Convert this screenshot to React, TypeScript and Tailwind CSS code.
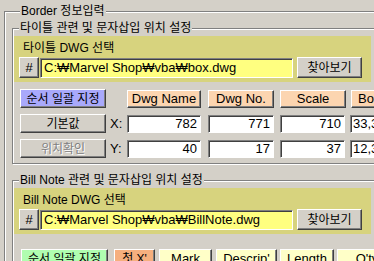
import React from 'react';

// classic 3D borders
const raised =
  'border border-t-white border-l-white border-r-[#404040] border-b-[#404040] shadow-[inset_-1px_-1px_0_#808080]';
const sunken =
  'border border-t-[#808080] border-l-[#808080] border-r-white border-b-white shadow-[inset_1px_1px_0_#404040]';

type BtnProps = {
  label: string;
  className: string;
  disabled?: boolean;
};

const Btn = ({ label, className, disabled }: BtnProps) => (
  <div
    className={`${raised} ${className} shrink-0 flex items-center justify-center leading-none whitespace-nowrap overflow-hidden ${
      disabled ? 'text-[#808080] [text-shadow:1px_1px_0_#fff]' : 'text-black'
    }`}
  >
    {label}
  </div>
);

const Field = ({ value, className }: { value: string; className: string }) => (
  <div
    className={`${sunken} ${className} shrink-0 bg-white flex items-center justify-end pr-[3px] text-[13px] leading-none whitespace-nowrap overflow-hidden`}
  >
    {value}
  </div>
);

type GroupProps = {
  title: string;
  className?: string;
  legendClass?: string;
  children: React.ReactNode;
};

const Group = ({ title, className = '', legendClass = '', children }: GroupProps) => (
  <fieldset
    className={`border border-[#808080] shadow-[inset_1px_1px_0_#fff,1px_1px_0_#fff] ${className}`}
  >
    <legend className={`px-[1px] bg-[#d4d0c8] leading-[16px] h-[16px] whitespace-nowrap ${legendClass}`}>
      {title}
    </legend>
    {children}
  </fieldset>
);

// yellow DWG picker panel
const DwgPanel = ({ label, path }: { label: string; path: string }) => (
  <div className="ml-[1px] w-[357px] h-[46px] bg-[#d7d37e] pt-[5px] flex flex-col">
    <div className="ml-[9px] h-[14px] leading-[14px] whitespace-nowrap">{label}</div>
    <div className="mt-[2px] ml-[5px] flex items-center">
      <Btn label="#" className="w-[20px] h-[21px] bg-[#d4d0c8] text-[13px]" />
      <div
        className={`${sunken} ml-[1px] w-[253px] h-[20px] bg-[#ffff80] flex items-center pl-[3px] text-[13px] leading-none whitespace-nowrap overflow-hidden`}
      >
        {path}
      </div>
      <Btn label="찾아보기" className="ml-[4px] w-[65px] h-[21px] bg-[#d4d0c8]" />
    </div>
  </div>
);

export default function App() {
  return (
    <div className="w-[374px] h-[261px] overflow-hidden bg-[#d4d0c8] pt-[3px] pl-[4px] text-[12px] text-black font-['Liberation_Sans','Noto_Sans_CJK_KR',sans-serif]">
      <Group title="Border 정보입력" className="w-[430px] h-[320px] pl-[7px]" legendClass="ml-[8px]">
        <Group
          title="타이틀 관련 및 문자삽입 위치 설정"
          className="mt-[1px] w-[400px] pb-[5px]"
          legendClass="ml-[6px]"
        >
          <DwgPanel label="타이틀 DWG 선택" path="C:₩Marvel Shop₩vba₩box.dwg" />

          <div className="mt-[7px] ml-[7px] flex items-center h-[19px]">
            <Btn label="순서 일괄 지정" className="w-[86px] h-[19px] bg-[#a9a9fb]" />
            <Btn label="Dwg Name" className="ml-[21px] w-[74px] h-[18px] bg-[#fcd5b0] text-[13px]" />
            <Btn label="Dwg No." className="ml-[7px] w-[66px] h-[18px] bg-[#fcd5b0] text-[13px]" />
            <Btn label="Scale" className="ml-[6px] w-[66px] h-[18px] bg-[#fcd5b0] text-[13px]" />
            <Btn label="Border" className="ml-[5px] w-[66px] h-[18px] bg-[#fcd5b0] text-[13px] !justify-start pl-[6px]" />
          </div>

          <div className="mt-[6px] ml-[7px] flex items-center h-[19px]">
            <Btn label="기본값" className="w-[86px] h-[19px] bg-[#d4d0c8]" />
            <div className="w-[21px] pl-[4px] text-[13px] leading-none">X:</div>
            <Field value="782" className="w-[74px] h-[18px]" />
            <Field value="771" className="ml-[7px] w-[66px] h-[18px]" />
            <Field value="710" className="ml-[6px] w-[65px] h-[18px]" />
            <Field value="33,3" className="ml-[5px] w-[66px] h-[18px] !justify-start pl-[2px]" />
          </div>

          <div className="mt-[6px] ml-[7px] flex items-center h-[19px]">
            <Btn label="위치확인" className="w-[86px] h-[19px] bg-[#d4d0c8]" disabled />
            <div className="w-[21px] pl-[4px] text-[13px] leading-none">Y:</div>
            <Field value="40" className="w-[74px] h-[18px]" />
            <Field value="17" className="ml-[7px] w-[66px] h-[18px]" />
            <Field value="37" className="ml-[6px] w-[65px] h-[18px]" />
            <Field value="12,3" className="ml-[5px] w-[66px] h-[18px] !justify-start pl-[2px]" />
          </div>
        </Group>

        <Group
          title="Bill Note 관련 및 문자삽입 위치 설정"
          className="mt-[8px] w-[400px] h-[120px]"
          legendClass="ml-[6px]"
        >
          <DwgPanel label="Bill Note DWG 선택" path="C:₩Marvel Shop₩vba₩BillNote.dwg" />

          <div className="mt-[15px] ml-[8px] flex items-start">
            <Btn label="순서 일괄 지정" className="w-[87px] h-[19px] bg-[#b0fdb0]" />
            <Btn label="첫 X'" className="ml-[6px] w-[41px] h-[19px] bg-[#f6af7e]" />
            <Btn label="Mark" className="ml-[4px] w-[53px] h-[19px] bg-[#ffffc8] text-[13px]" />
            <Btn label="Descrip'" className="ml-[4px] w-[61px] h-[19px] bg-[#ffffc8] text-[13px]" />
            <Btn label="Length" className="ml-[3px] w-[54px] h-[19px] bg-[#ffffc8] text-[13px]" />
            <Btn label="Q'ty" className="ml-[3px] w-[60px] h-[19px] bg-[#ffffc8] text-[13px]" />
          </div>
        </Group>
      </Group>
    </div>
  );
}
